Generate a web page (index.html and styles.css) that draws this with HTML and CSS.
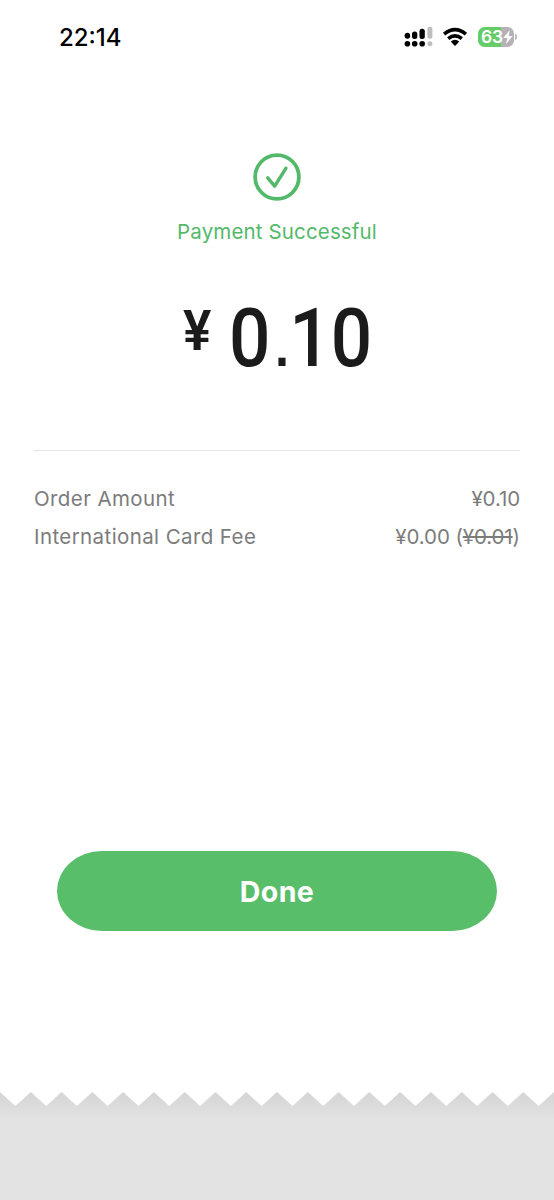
FILE: index.html
```html
<!DOCTYPE html>
<html lang="en">
<head>
<meta charset="utf-8">
<title>Payment Successful</title>
<link rel="stylesheet" href="styles.css">
</head>
<body>
<main class="screen">
  <header class="status">
    <span class="clock">22:14</span>
    <div class="indicators">
      <svg class="signal" width="29" height="22" viewBox="0 0 29 22">
        <g fill="#000"><ellipse cx="3.4" cy="9.8" rx="2.8" ry="3"/><rect x="8" y="5.4" width="5.3" height="7.5" rx="2.5"/><rect x="15.5" y="2.7" width="5.3" height="10.2" rx="2.5"/><circle cx="3.4" cy="17.8" r="2.8"/><circle cx="10.7" cy="17.8" r="2.8"/><circle cx="18.2" cy="17.8" r="2.8"/></g>
        <g fill="#bebebe"><rect x="23.4" y="0.8" width="5" height="12" rx="2.4"/><circle cx="25.9" cy="17.8" r="2.5"/></g>
      </svg>
      <svg class="wifi" width="26" height="20" viewBox="0 0 26 20">
        <path d="M2.1 7.2Q13-1.8 23.9 7.2M6.2 11.6Q13 6.2 19.8 11.6" fill="none" stroke="#000" stroke-width="3.6"/>
        <path d="M8.8 14.6Q13 11 17.2 14.6L13.6 18.4Q13 18.9 12.4 18.4Z"/>
      </svg>
      <div class="battery"><span class="level">63</span>
        <svg class="bolt" width="10" height="14" viewBox="0 0 10 14"><path d="M6.8 0L.3 7.9H4.4L3 14 9.7 5.9H5.6Z" fill="#fff"/></svg>
      </div><i class="cap"></i>
    </div>
  </header>
  <section class="result">
    <svg class="check" width="48" height="48" viewBox="0 0 48 48" fill="none" stroke="#53b96a"><circle cx="24" cy="24" r="21.9" stroke-width="3.8"/><path d="M14.7 24.8L21.7 33.2 33 15.2" stroke-width="3.4" stroke-linecap="round" stroke-linejoin="round"/></svg>
    <p class="message">Payment Successful</p>
    <div class="amount"><span class="currency">¥</span><span class="value">0<span class="point">.</span>10</span></div>
  </section>
  <section class="details">
    <div class="row"><span class="order">Order Amount</span><span class="total">¥0.10</span></div>
    <div class="row"><span class="feename">International Card Fee</span><span class="fee">¥0.00 (<s>¥0.01</s>)</span></div>
  </section>
  <button class="done">Done</button>
  <footer class="tear">
    <svg width="554" height="14" viewBox="0 0 554 14"><defs><pattern id="teeth" width="30.78" height="14" patternUnits="userSpaceOnUse"><path d="M0 0H30.78L15.39 14Z" fill="#fff"/></pattern></defs><rect width="554" height="14" fill="url(#teeth)"/></svg>
  </footer>
</main>
</body>
</html>
```
FILE: styles.css
```css
* { box-sizing: border-box; }
body { margin: 0; background: #fff; font-family: Inter, "Noto Sans", sans-serif; }
.screen { width: 554px; height: 1200px; display: flex; flex-direction: column; align-items: center; overflow: hidden; background: #fff; }
.status { width: 100%; height: 153px; padding: 22px 37px 0 59px; display: flex; justify-content: space-between; align-items: flex-start; flex: none; }
.clock { font-size: 24px; line-height: 31px; font-weight: 550; letter-spacing: 0; }
.indicators { display: flex; align-items: center; height: 30px; }
.signal { margin-right: 9px; }
.wifi { margin-right: 10px; }
.battery { width: 36px; height: 20px; border-radius: 6.5px; background: linear-gradient(90deg, #65cc68 63%, #b5b2b7 63%); display: flex; align-items: center; padding-left: 3px; }
.level { color: #fff; font-size: 17.5px; font-weight: 600; line-height: 20px; letter-spacing: -0.3px; }
.bolt { flex: none; }
.cap { width: 2px; height: 6px; margin-left: 1px; border-radius: 0 2px 2px 0; background: #bbb; }
.result { display: flex; flex-direction: column; align-items: center; flex: none; width: 100%; }
.message { margin: 17px 0 0; color: #53b96a; font-size: 20.5px; line-height: 27px; letter-spacing: 0.14px; font-weight: 380; white-space: nowrap; }
.amount { width: 188px; height: 80px; margin-top: 53px; display: flex; align-items: flex-start; font-family: Roboto, sans-serif; font-weight: 540; color: #1b1b1b; }
.currency { width: 46px; flex: none; font-size: 56px; line-height: 67px; font-weight: 600; transform: scaleX(.95); transform-origin: left; }
.value { flex: none; font-size: 81px; line-height: 81px; transform: scaleX(.9); transform-origin: left; }
.point { display: inline-block; width: 21px; padding-left: 5px; font: 700 56px/1 "Liberation Sans", sans-serif; }
.details { width: 486px; margin-top: 72px; padding-top: 29px; border-top: 1px solid #e4e4e4; color: #7c7c7c; font-size: 20.5px; font-weight: 370; flex: none; }
.row { display: flex; justify-content: space-between; height: 38px; line-height: 37px; white-space: nowrap; }
.order, .feename { letter-spacing: 0.4px; }
.fee, .total { letter-spacing: -0.1px; }
.done { width: 440px; height: 80px; margin: 295px 0 0; border: 0; border-radius: 45px / 40px; background: #58be6a; color: #fff; font: 700 28.5px Inter, sans-serif; letter-spacing: 0.4px; flex: none; }
.tear { width: 100%; height: 108px; margin-top: auto; background: linear-gradient(#d4d4d4, #dbdbdb 13px, #e3e3e3 28px); flex: none; }
.tear svg { display: block; }
```
